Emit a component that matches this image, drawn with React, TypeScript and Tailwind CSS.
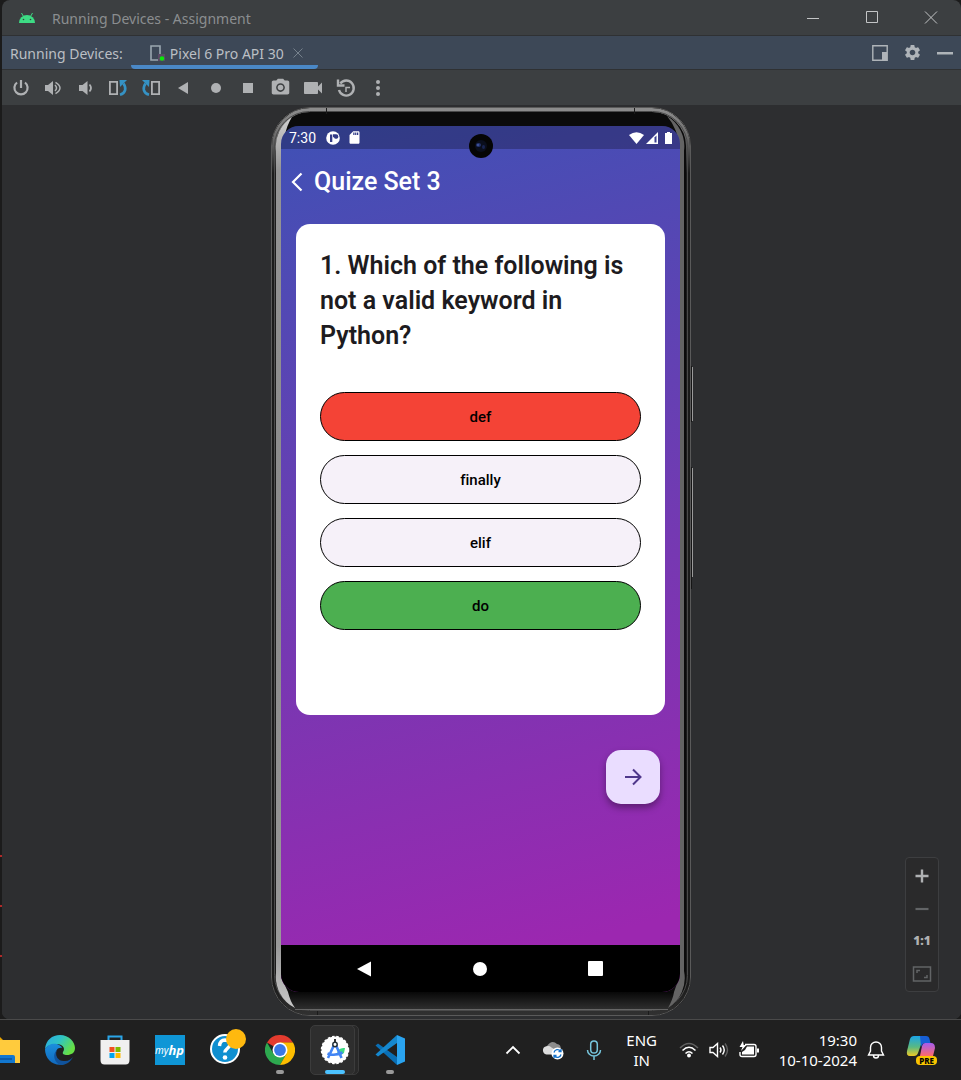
import type { ReactNode } from "react";
import { MdPhotoCamera, MdSdCard, MdSettings, MdVideocam } from "react-icons/md";

const UI = "font-['Noto_Sans',sans-serif]";

function ToolButton({ label, children }: { label: string; children: ReactNode }) {
  return (
    <button type="button" aria-label={label} className="flex size-5 items-center justify-center text-[#afb1b3]">
      {children}
    </button>
  );
}

function Android() {
  return (
    <svg viewBox="0 0 16 12" className="h-3 w-4" aria-hidden="true">
      <path d="M0 11a8 8 0 0 1 16 0z" fill="#3ddc84" />
      <path d="M2.5 1l2 3.5M13.5 1l-2 3.5" stroke="#3ddc84" strokeWidth="1" />
      <circle cx="4.5" cy="7.5" r=".8" fill="#3c3f41" />
      <circle cx="11.5" cy="7.5" r=".8" fill="#3c3f41" />
    </svg>
  );
}

function TitleBar() {
  return (
    <header className="flex h-9 items-center border-b border-[#2f3133] pl-[17px] pr-[22px] pt-px">
      <Android />
      <h1 className="ml-[17px] text-[14px] font-normal text-[#8b8e90]">Running Devices - Assignment</h1>
      <div className="ml-auto flex gap-[43px] text-[#c3c5c6]">
        <button type="button" aria-label="Minimize" className="size-4">
          <svg viewBox="0 0 16 16" stroke="currentColor"><path d="M2 8.500h12" /></svg>
        </button>
        <button type="button" aria-label="Maximize" className="size-4">
          <svg viewBox="0 0 16 16" fill="none" stroke="currentColor"><path d="M2.500 1.500h11v11h-11z" /></svg>
        </button>
        <button type="button" aria-label="Close" className="size-4">
          <svg viewBox="0 0 16 16" fill="none" stroke="currentColor"><path d="M2 1.500l12 12M14 1.500L2 13.500" /></svg>
        </button>
      </div>
    </header>
  );
}

function TabBar() {
  return (
    <div className="flex h-[34px] items-stretch border-b border-[#2f3133] bg-[#3d4857] pl-2 pr-2 text-[14px] text-[#bbbfc4]">
      <span className="flex items-center pt-[2px]">Running Devices:</span>
      <div className="ml-2 flex w-[187px] items-center rounded-b-sm border-b-4 border-[#4a88c7] pl-[18px] pt-[5px]">
        <svg viewBox="0 0 17 18" className="h-[18px] w-[17px] shrink-0" fill="none" aria-hidden="true">
          <path d="M2 2h9v14H2z" stroke="#9aa7b0" strokeWidth="1.6" />
          <path d="M9 10h7v7H9z" fill="#5c4a66" />
          <circle cx="13" cy="14.5" r="2.3" fill="#0ae80a" />
        </svg>
        <span className="ml-1 whitespace-nowrap">Pixel 6 Pro API 30</span>
        <button type="button" aria-label="Close tab" className="ml-[9px] size-[10px] shrink-0 text-[#76818c]">
          <svg viewBox="0 0 10 10" stroke="currentColor"><path d="M.5.5l9 9M9.5.5l-9 9" /></svg>
        </button>
      </div>
      <div className="ml-auto flex items-center gap-[15px] text-[#afb4b9]">
        <button type="button" aria-label="View mode" className="size-4">
          <svg viewBox="0 0 16 16" fill="none" stroke="currentColor"><path d="M.8.8h14.400v14.400H.8z" strokeWidth="1.400" /><path d="M10 7h5v8h-5z" fill="currentColor" stroke="none" /></svg>
        </button>
        <button type="button" aria-label="Settings"><MdSettings size={19} /></button>
        <button type="button" aria-label="Hide" className="size-4">
          <svg viewBox="0 0 16 16" fill="currentColor"><path d="M0 7h16v2.500H0z" /></svg>
        </button>
      </div>
    </div>
  );
}

function RotateIcon({ flip }: { flip?: boolean }) {
  return (
    <svg viewBox="0 0 20 18" className={flip ? "h-[18px] w-5 -scale-x-100" : "h-[18px] w-5"} fill="none" aria-hidden="true">
      <path d="M1.900 2.900h7.200v12.200H1.900z" stroke="#afb1b3" strokeWidth="1.800" />
      <path d="M12 15.800c6-1.800 6.500-6.800 3.500-11.300" stroke="#3592c4" strokeWidth="2.600" />
      <path d="M11.500 1h7.500l-7 7z" fill="#3592c4" />
    </svg>
  );
}

function Toolbar() {
  return (
    <div className="flex h-[35px] items-center pl-[9px]">
      <div role="toolbar" aria-label="Device controls" className="flex w-[377px] justify-between">
        <ToolButton label="Power">
          <svg viewBox="0 0 18 18" className="size-[18px]" fill="none" stroke="currentColor" strokeWidth="2.200">
            <path d="M9 1v8M5 3.500a6.600 6.600 0 1 0 8 0" />
          </svg>
        </ToolButton>
        <ToolButton label="Volume up">
          <svg viewBox="0 0 18 18" className="size-[18px]" fill="none" stroke="currentColor">
            <path d="M1 6h3l5-4v14l-5-4H1z" fill="currentColor" stroke="none" />
            <path d="M11 6q3 3 0 6M11.500 3.300q9 5.700 0 11.400" strokeWidth="1.500" />
          </svg>
        </ToolButton>
        <ToolButton label="Volume down">
          <svg viewBox="0 0 18 18" className="size-[18px]" fill="none" stroke="currentColor">
            <path d="M2 6h3.500l5-4v14l-5-4H2z" fill="currentColor" stroke="none" />
            <path d="M12.500 5.500q3 3.500 0 7" strokeWidth="1.800" />
          </svg>
        </ToolButton>
        <ToolButton label="Rotate left"><RotateIcon /></ToolButton>
        <ToolButton label="Rotate right"><RotateIcon flip /></ToolButton>
        <ToolButton label="Back">
          <svg viewBox="0 0 12 12" className="size-3" fill="currentColor"><path d="M1 6l10-6v12z" /></svg>
        </ToolButton>
        <ToolButton label="Home"><span className="size-[10px] rounded-full bg-current" /></ToolButton>
        <ToolButton label="Overview"><span className="size-[10px] bg-current" /></ToolButton>
        <ToolButton label="Take screenshot"><MdPhotoCamera size={21} className="shrink-0" /></ToolButton>
        <ToolButton label="Record screen"><MdVideocam size={24} className="shrink-0" /></ToolButton>
        <ToolButton label="Snapshots">
          <svg viewBox="0 0 20 20" className="size-5" fill="none" stroke="currentColor" strokeWidth="2.400">
            <path d="M4.300 5.500A7.500 7.500 0 1 1 3 12" />
            <path d="M2 1.500V7.500h6.500" />
            <path d="M10 14V9.500h4" strokeWidth="1.500" />
          </svg>
        </ToolButton>
        <ToolButton label="More">
          <svg viewBox="0 0 6 18" className="h-[18px] w-[6px]" fill="currentColor"><circle cx="3" cy="3" r="2" /><circle cx="3" cy="9" r="2" /><circle cx="3" cy="15" r="2" /></svg>
        </ToolButton>
      </div>
    </div>
  );
}

function DeviceFrame() {
  return (
    <svg viewBox="0 0 420 909" preserveAspectRatio="none" className="absolute inset-0 size-full overflow-visible" fill="none" aria-hidden="true">
      <defs>
        <linearGradient id="rim" x1="0" y1="0" x2="0" y2="1">
          <stop offset="0" stopColor="#8c8c8c" />
          <stop offset=".03" stopColor="#6a6a6a" />
          <stop offset=".07" stopColor="#1c1c1c" />
          <stop offset=".97" stopColor="#1a1a1a" />
          <stop offset="1" stopColor="#303030" />
        </linearGradient>
        <linearGradient id="chin" x1="0" y1="0" x2="0" y2="1">
          <stop offset="0" stopColor="#080808" />
          <stop offset="1" stopColor="#2e2e2e" />
        </linearGradient>
        <linearGradient id="edge" x1="0" y1="0" x2="0" y2="1">
          <stop offset="0" stopColor="#d0d0d0" />
          <stop offset=".06" stopColor="#949494" />
          <stop offset=".5" stopColor="#8a8a8a" />
          <stop offset=".93" stopColor="#999" />
          <stop offset="1" stopColor="#c8c8c8" />
        </linearGradient>
      </defs>
      <rect x="0" y="0" width="420" height="909" rx="39" fill="#0b0b0b" />
      <rect x="3" y="3" width="414" height="903" rx="36" stroke="url(#rim)" strokeWidth="4" />
      <rect x=".5" y=".5" width="419" height="908" rx="38.500" stroke="#5a5a5a" strokeWidth="1" />
      <rect x="3.500" y="4.500" width="413" height="899" rx="35" stroke="#4a4a4a" strokeWidth="1" />
      <path d="M10 885h400l-9 17H22z" fill="url(#chin)" />
      <path d="M24 902.500h373" stroke="#666" />
      <path d="M5 44A35 35 0 0 1 21 10Q16 18 14 28L10 45V870L17 885Q19 894 24 901A35 35 0 0 1 5 866z" fill="url(#edge)" />
      <path d="M396 9A35 35 0 0 1 413 44V864A35 35 0 0 1 397 901Q402 892 403 885L409 868V42Q407 22 396 9z" fill="#646464" />
      <path d="M55.500 1v6M363.500 1v6M46.500 904v4M377.500 904v4" stroke="#1b1b1b" />
      <path d="M421.500 260v54M421.500 361v109" stroke="#9a9a9a" strokeWidth="1" />
      <path d="M420.500 259v56M420.500 360v122" stroke="#151515" strokeWidth="1" />
    </svg>
  );
}

function StatusBar() {
  return (
    <div className="flex h-[23px] shrink-0 items-center bg-black/25 px-2 text-white">
      <span className="text-[14px] leading-none">7:30</span>
      <svg viewBox="0 0 14 14" className="ml-[10px] size-[14px]" aria-hidden="true">
        <circle cx="7" cy="7" r="6.800" fill="#fff" />
        <path d="M4 3.500h2.300v7.500H4z" fill="#333b86" />
        <path d="M7 3.200h3a2.300 2.300 0 1 1-2.100 3H7z" fill="#333b86" />
      </svg>
      <MdSdCard size={15} className="ml-[7px]" />
      <div className="ml-auto flex items-center gap-[2px]">
        <svg viewBox="0 0 15 12" className="h-3 w-[15px]" fill="currentColor"><path d="M0 3q7.500-5.500 15 0L7.500 12z" /></svg>
        <svg viewBox="0 0 12 12" className="size-3"><path d="M0 12L12 0v12z" fill="#fff" /><path d="M8.500 5.500L10.500 3.500V10.500h-2z" fill="#3a3f90" /></svg>
        <svg viewBox="0 0 7 12" className="ml-[5px] h-3 w-[7px]" fill="currentColor"><path d="M2 0h3v1h2v11H0V1h2z" /></svg>
      </div>
    </div>
  );
}

const answers = [
  { text: "def", tone: "bg-[#f44336]" },
  { text: "finally", tone: "bg-[#f6f1f9]" },
  { text: "elif", tone: "bg-[#f6f1f9]" },
  { text: "do", tone: "bg-[#4caf50]" },
];

function Phone() {
  return (
    <div className="relative mx-auto mt-[2px] w-[420px] max-w-full pb-[24px] pl-[10px] pr-[11px] pt-[19px]">
      <DeviceFrame />
      <div className="relative flex flex-col overflow-hidden rounded-[18px] bg-[linear-gradient(165deg,#3f51b5,#9c27b0_92%)] font-['Roboto',sans-serif] [font-variant-ligatures:none]">
        <StatusBar />
        <header className="flex h-[66px] items-center pl-[10px] text-white">
          <button type="button" aria-label="Go back" className="h-5 w-3">
            <svg viewBox="0 0 12 20" fill="none" stroke="currentColor" strokeWidth="2.200"><path d="M10.500 1.500L2 10l8.500 8.500" /></svg>
          </button>
          <h2 className="ml-[11px] text-[25px] font-medium">Quize Set 3</h2>
        </header>
        <section className="mx-[15px] mt-[9px] flex min-h-[491px] flex-col rounded-[14px] bg-white px-[24px] pt-6">
          <h3 className="text-[25px] font-semibold leading-[35px] text-[#1d1b20]">
            1. Which of the following is not a valid keyword in Python?
          </h3>
          <div className="mt-[39px] flex flex-col gap-[14px]">
            {answers.map((a) => (
              <button key={a.text} type="button" className={`h-[49px] rounded-full border border-black pt-[2px] text-[15px] font-medium text-black ${a.tone}`}>
                {a.text}
              </button>
            ))}
          </div>
        </section>
        <div className="flex justify-end pb-[141px] pr-5 pt-[35px]">
          <button type="button" aria-label="Next question" className="flex size-[54px] items-center justify-center rounded-[15px] bg-[#eaddff] text-[#4f378b] shadow-[0_4px_7px_rgba(0,0,0,0.35)]">
            <svg viewBox="0 0 18 18" className="size-[18px]" fill="none" stroke="currentColor" strokeWidth="2"><path d="M1 9h15M9 1.500L16.500 9 9 16.500" /></svg>
          </button>
        </div>
        <nav aria-label="System navigation" className="flex h-[47px] items-center justify-between bg-black pl-[76px] pr-[77px] text-white">
          <button type="button" aria-label="Back"><svg viewBox="0 0 15 16" className="h-4 w-[15px]" fill="currentColor"><path d="M0 8L14 .5v15z" /></svg></button>
          <button type="button" aria-label="Home" className="size-[14px] rounded-full bg-white" />
          <button type="button" aria-label="Recent apps" className="size-[15px] rounded-[1px] bg-white" />
        </nav>
      </div>
      <svg viewBox="0 0 24 24" className="absolute left-1/2 top-[27px] size-6 -translate-x-1/2" aria-hidden="true">
        <circle cx="12" cy="12" r="12" fill="#050505" />
        <circle cx="12" cy="12" r="6" fill="#0a0e1c" />
        <ellipse cx="9.500" cy="11" rx="2.500" ry="2" fill="#25356f" />
        <ellipse cx="14.500" cy="13" rx="1.500" ry="2" fill="#182450" />
        <circle cx="9" cy="11" r=".8" fill="#5c74c8" />
      </svg>
    </div>
  );
}

function ZoomControls() {
  return (
    <div className="absolute bottom-[27px] right-[22px] flex h-[135px] w-[34px] flex-col items-center justify-between rounded-[4px] border border-[#3d3e40] bg-[#2a2a2b] pb-[7px] pt-[8px] text-[#afb1b3]">
      <button type="button" aria-label="Zoom in" className="size-5"><svg viewBox="0 0 20 20" stroke="currentColor" strokeWidth="2.400"><path d="M3.500 10h13M10 3.500v13" /></svg></button>
      <button type="button" aria-label="Zoom out" className="size-5 text-[#626466]"><svg viewBox="0 0 20 20" stroke="currentColor" strokeWidth="2.200"><path d="M3.500 10h13" /></svg></button>
      <button type="button" className="h-5 text-[12px] font-black leading-5">1:1</button>
      <button type="button" aria-label="Fit to window" className="size-5 text-[#626466]"><svg viewBox="0 0 20 20" fill="none" stroke="currentColor" strokeWidth="1.500"><path d="M1.500 3h17v14h-17zM5 9V6.500h3M15 11v2.500h-3" /></svg></button>
    </div>
  );
}

function TaskButton({ label, running, children }: { label: string; running?: boolean; children: ReactNode }) {
  return (
    <button type="button" aria-label={label} className="relative flex h-[60px] w-[55px] shrink-0 items-center justify-center">
      {children}
      {running && <span className="absolute bottom-[6px] left-1/2 h-1 w-2 -translate-x-1/2 rounded-full bg-[#9a9a9a]" />}
    </button>
  );
}

const Folder = () => (
  <svg viewBox="0 0 30 30" className="size-[30px]">
    <path d="M0 2h10l3 3v5H0z" fill="#e8a400" />
    <path d="M0 5h30v23H0z" fill="#ffcb3d" />
    <path d="M0 28v-5l3-3h20q2 0 2 2v6z" fill="#1277cf" />
    <path d="M4 24h18" stroke="#0a529c" strokeWidth="1.500" />
  </svg>
);

const Edge = () => (
  <svg viewBox="0 0 30 30" className="size-[30px]">
    <defs>
      <linearGradient id="eg1" x1="0" x2="1" y1="0" y2=".5"><stop stopColor="#2aa9e6" /><stop offset=".5" stopColor="#2fc3c4" /><stop offset="1" stopColor="#66df45" /></linearGradient>
      <linearGradient id="eg2" x1="0" x2="0" y1="0" y2="1"><stop stopColor="#1b8fdd" /><stop offset="1" stopColor="#1169bd" /></linearGradient>
    </defs>
    <path d="M0 14C1 5 7 0 15 0c9 0 15 7 15 13 0 5-4 7-8 7-3 0-5-1-4-3 3-4-1-8-6-8C6 9 2 11 0 14z" fill="url(#eg1)" />
    <path d="M0 14c3-5 8-6 12-5 3 1 5 3 5 4-5-1-7 4-6 8 1 5 5 8 9 8C9 32 0 25 0 14z" fill="url(#eg2)" />
    <path d="M12 15c-3 6 2 12 8 11 4 0 6-2 8-4-3 6-8 8-12 8-7-2-9-11-4-15z" fill="#10539c" />
  </svg>
);

const Store = () => (
  <svg viewBox="0 0 30 30" className="size-[30px]">
    <path d="M8.500 7V1.500h13V7" fill="none" stroke="#2aa5e8" strokeWidth="2" />
    <path d="M.5 5h29v20q0 4.500-4 4.500H4.500q-4 0-4-4.500z" fill="#f0f0f0" />
    <path d="M9.500 12h5v5h-5z" fill="#f25022" /><path d="M15.500 12h5v5h-5z" fill="#7fba00" />
    <path d="M9.500 18h5v5h-5z" fill="#00a4ef" /><path d="M15.500 18h5v5h-5z" fill="#ffb900" />
  </svg>
);

const Help = () => (
  <svg viewBox="0 0 36 36" className="size-9 shrink-0">
    <circle cx="15" cy="20" r="14" fill="#0f8fd0" stroke="#fff" strokeWidth="2" />
    <path d="M9.500 17q.5-6 5.500-6 5 .5 5 4.500c0 3.500-5 4-5.200 8" fill="none" stroke="#fff" strokeWidth="3.400" />
    <circle cx="15" cy="28.500" r="2.300" fill="#fff" />
    <circle cx="26" cy="10" r="10" fill="#ffb90f" />
  </svg>
);

const Chrome = () => (
  <svg viewBox="0 0 30 30" className="size-[30px]">
    <path d="M15 15L2 7.500A15 15 0 0 1 28 7.500L15 8z" fill="#e33b2e" />
    <path d="M2 7.500A15 15 0 0 0 15 30l6.500-11L15 15 8.500 18.700z" fill="#2da94f" />
    <path d="M28 7.500A15 15 0 0 1 15 30l6.500-11.200L15 15V7.500z" fill="#fdbd00" />
    <circle cx="15" cy="15" r="7.500" fill="#fff" /><circle cx="15" cy="15" r="5.900" fill="#3b78e7" />
  </svg>
);

const Studio = () => (
  <svg viewBox="0 0 30 30" className="size-[30px]">
    <circle cx="15" cy="15" r="13.500" fill="#fff" />
    <circle cx="15" cy="15" r="13.500" fill="none" stroke="#fff" strokeWidth="1.500" strokeDasharray="2.500 1.800" />
    <path d="M17 19q1-7 8-6l-1 5-3 2z" fill="#3ddc84" />
    <path d="M14.500 9L8 23M15.500 9L21.500 23M7.500 18.500q7 3 15-1" fill="none" stroke="#4285f4" strokeWidth="2.600" />
    <path d="M15 4v4" stroke="#333" strokeWidth="2" /><circle cx="15" cy="9.500" r="2.200" fill="#fff" stroke="#263238" strokeWidth="1.500" />
  </svg>
);

const VSCode = () => (
  <svg viewBox="0 0 30 30" className="size-[30px]">
    <path d="M.5 10.500L3 8.500 22 22v8z" fill="#0a6fb5" />
    <path d="M.5 19.500L22 0v8L3 21.500z" fill="#1588cf" />
    <path d="M22 0l8 3.500v23L22 30z" fill="#2aa4f0" />
  </svg>
);

const Copilot = () => (
  <svg viewBox="0 0 30 30" className="size-[30px]">
    <defs>
      <linearGradient id="cp1" x1="0" x2="0" y1="0" y2="1"><stop stopColor="#1ba5e8" /><stop offset=".55" stopColor="#59b982" /><stop offset="1" stopColor="#efca24" /></linearGradient>
      <linearGradient id="cp2" x1="0" x2="0" y1="0" y2="1"><stop stopColor="#a45cf0" /><stop offset="1" stopColor="#ff6a6a" /></linearGradient>
    </defs>
    <path d="M8 1h10L12 18q-1 3-4 3H4Q0 21 1 16L4 4q1-3 4-3z" fill="url(#cp1)" />
    <path d="M14 1h6q3 0 3.500 3l1 4h-5q-3 0-4.500 4z" fill="#175fd5" />
    <path d="M19 8h6q4 0 4 5l-2 8H14l2-10q1-3 3-3z" fill="url(#cp2)" />
  </svg>
);

function Taskbar() {
  return (
    <footer className="flex h-[61px] shrink-0 items-start overflow-hidden border-t border-[#4a4a4a] bg-[#202020] text-white">
      <nav aria-label="Taskbar" className="-ml-[23px] flex">
        <TaskButton label="File Explorer"><Folder /></TaskButton>
        <TaskButton label="Microsoft Edge"><Edge /></TaskButton>
        <TaskButton label="Microsoft Store"><Store /></TaskButton>
        <button type="button" className="flex h-[60px] w-[55px] items-center justify-center">
          <span className="flex size-[30px] items-center justify-center bg-[#0f96d6] text-[10px] italic leading-none">my<b className="text-[13px]">hp</b></span>
        </button>
        <TaskButton label="Help and Support"><span className="-mt-[6px] ml-[6px]"><Help /></span></TaskButton>
        <TaskButton label="Google Chrome" running><Chrome /></TaskButton>
        <button type="button" aria-label="Android Studio" className="relative flex h-[60px] w-[55px] items-center justify-center">
          <span className="absolute left-3 top-[5px] h-[50px] w-10 rounded-[5px] border border-[#3a3a3a] bg-[#282828]" />
          <span className="absolute left-[3px] top-[5px] h-[50px] w-[45px] rounded-[5px] border border-[#3c3c3c] bg-[#2e2e2e]" />
          <span className="relative"><Studio /></span>
          <span className="absolute bottom-[6px] left-1/2 h-1 w-5 -translate-x-1/2 rounded-full bg-[#4cc2ff]" />
        </button>
        <TaskButton label="Visual Studio Code" running><VSCode /></TaskButton>
      </nav>
      <div className="ml-auto flex h-[60px] items-center pr-[25px]">
        <button type="button" aria-label="Show hidden icons" className="h-4 w-4"><svg viewBox="0 0 16 16" fill="none" stroke="#fff" strokeWidth="1.800"><path d="M1.500 11.500L8 5l6.500 6.500" /></svg></button>
        <button type="button" aria-label="OneDrive" className="ml-[21px] h-5 w-[22px]">
          <svg viewBox="0 0 22 20"><path d="M5 14a4.500 4.500 0 0 1 0-8q5-7 10-2 4 0 4 6v4z" fill="#8d8d8d" /><path d="M4.500 14.500a4.200 4.200 0 0 1 0-8.300q3-.7 5 1.300l8 5v2z" fill="#ddd" /><circle cx="15.500" cy="13.500" r="6" fill="#fff" /><path d="M12 12.500a3.700 3.700 0 0 1 6.500-1.500M19 14.500a3.700 3.700 0 0 1-6.500 1.500M19 9v2.500h-2.500M12 18v-2.500h2.500" fill="none" stroke="#1471c9" strokeWidth="1.300" /></svg>
        </button>
        <button type="button" aria-label="Microphone" className="ml-[22px] h-5 w-4">
          <svg viewBox="0 0 16 20" fill="none" stroke="#76c5dc" strokeWidth="1.500"><rect x="4.700" y="1" width="6.600" height="12" rx="3.300" /><path d="M1.500 10a6.500 6 0 0 0 13 0M8 16v4" /></svg>
        </button>
        <button type="button" className="ml-6 text-center text-[15px] leading-5">ENG<br />IN</button>
        <div className="ml-[22px] flex items-center gap-[10px]">
          <svg viewBox="0 0 20 16" className="h-4 w-5" fill="none" stroke="#fff" strokeWidth="1.500" role="img" aria-label="Wi-Fi"><path d="M1 6q9-9 18 0" stroke="#606060" /><path d="M3.500 8.500q6.500-6.500 13 0M6.500 11.500q3.500-3.500 7 0" /><circle cx="10" cy="13.500" r="1.200" fill="#fff" /></svg>
          <svg viewBox="0 0 20 16" className="h-4 w-5" fill="none" stroke="#fff" strokeWidth="1.400" role="img" aria-label="Volume"><path d="M1 5.500h3l4.500-4v13l-4.500-4H1z" /><path d="M11 5.500q2 2.500 0 5M13.500 3.500q3.500 4.500 0 9" /><path d="M16 1.500q5 6.500 0 13" stroke="#606060" /></svg>
          <svg viewBox="0 0 20 18" className="h-[18px] w-5" role="img" aria-label="Battery charging"><path d="M6 3.500h9q2 0 2 2v8q0 2-2 2H3q-2 0-2-2V11" fill="none" stroke="#fff" strokeWidth="1.400" /><path d="M8 5.500h7v8H3V11l3-2z" fill="#fff" /><path d="M18 7.500h2v4h-2zM4 0L.5 6h3L2 10l5.500-6H4.700z" fill="#fff" /></svg>
        </div>
        <button type="button" className="ml-4 w-[82px] whitespace-nowrap text-right text-[15px] leading-5">19:30<br />10-10-2024</button>
        <button type="button" aria-label="Notifications" className="ml-[10px] h-5 w-[18px]">
          <svg viewBox="0 0 18 20" fill="none" stroke="#fff" strokeWidth="1.400"><path d="M1.500 15l2-4V7.500a5.500 5.500 0 0 1 11 0V11l2 4zM6.500 15.500a2.500 2.500 0 0 0 5 0" /></svg>
        </button>
        <button type="button" className="relative ml-[21px] size-[30px]">
          <Copilot />
          <span className="absolute -right-[1px] bottom-0 rounded-sm bg-[#f8c400] px-[3px] text-[8px] font-extrabold leading-[9px] text-black">PRE</span>
        </button>
      </div>
    </footer>
  );
}

export default function App() {
  return (
    <div className={`flex min-h-screen flex-col bg-[#1b1b1b] ${UI}`}>
      <div className="flex flex-1">
        <div aria-hidden="true" className="flex w-[2px] flex-col justify-end gap-12 pb-[62px]">
          <span className="h-[2px] bg-[#b02a2a]" />
          <span className="h-[2px] bg-[#b02a2a]" />
          <span className="h-[2px] bg-[#b02a2a]" />
        </div>
        <div className="flex flex-1 flex-col rounded-[8px] bg-[#3c3f41]">
          <TitleBar />
          <TabBar />
          <Toolbar />
          <main className="relative flex-1 rounded-b-[7px] bg-[#2d2e30] pb-[3px] pr-px">
            <Phone />
            <ZoomControls />
          </main>
        </div>
      </div>
      <Taskbar />
    </div>
  );
}
